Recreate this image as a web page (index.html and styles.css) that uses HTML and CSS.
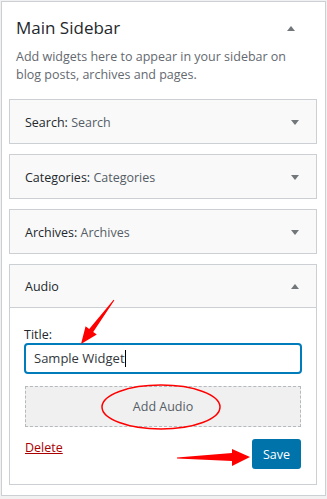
FILE: index.html
```html
<!DOCTYPE html>
<html lang="en">
<head>
    <meta charset="UTF-8">
    <meta name="viewport" content="width=device-width, initial-scale=1.0">
    <title>Main Sidebar</title>
    <link rel="stylesheet" href="styles.css">
</head>
<body>
    <div class="sidebar">
        <div class="sidebar-head">
            <div class="sidebar-title">
                <h2>Main Sidebar</h2>
                <span class="toggle up"></span>
            </div>
            <p class="desc">Add widgets here to appear in your sidebar on blog posts, archives and pages.</p>
        </div>

        <div class="widget">
            <div class="widget-top">
                <h3>Search: <span class="in-title">Search</span></h3>
                <span class="toggle"></span>
            </div>
        </div>

        <div class="widget">
            <div class="widget-top">
                <h3>Categories: <span class="in-title">Categories</span></h3>
                <span class="toggle"></span>
            </div>
        </div>

        <div class="widget">
            <div class="widget-top">
                <h3>Archives: <span class="in-title">Archives</span></h3>
                <span class="toggle"></span>
            </div>
        </div>

        <div class="widget open">
            <div class="widget-top">
                <h3>Audio</h3>
                <span class="toggle up"></span>
            </div>
            <div class="widget-inside">
                <label class="field-label">Title:</label>
                <div class="field">Sample Widget<span class="caret"></span></div>
                <div class="add-media">Add Audio</div>
                <div class="actions">
                    <a href="#" class="delete">Delete</a>
                    <button class="btn-save">Save</button>
                </div>
            </div>
        </div>
    </div>

    <!-- red annotations drawn over the screenshot -->
    <svg class="notes" width="327" height="499" viewBox="0 0 327 499">
        <polygon fill="#f00" points="113.6,299.7 89.2,328.9 85.6,326.2 81,344 96.8,334.6 93.2,331.9 114.4,300.3"/>
        <ellipse cx="161" cy="407" rx="59" ry="22" fill="none" stroke="#f00" stroke-width="1.5"/>
        <polygon fill="#f00" points="177,457.5 232,453 232,449 250,457 232,466 232,461 177,458.5"/>
    </svg>
</body>
</html>
```

FILE: styles.css
```css
:root {
    --border: #ccd0d4;
    --text: #23282d;
    --muted: #646970;
    --blue: #0073aa;
}

* {
    box-sizing: border-box;
}

body {
    margin: 0;
    background: #f1f1f1;
    font-family: 'Open Sans', 'Liberation Sans', sans-serif;
    color: var(--text);
    position: relative;
}

.sidebar {
    margin: 1px 1px 0 1px;
    background: #fff;
    border: 1px solid var(--border);
    padding: 0 8px 10px 7px;
}

.sidebar-head {
    padding: 15px 6px 15px 7px;
}

.sidebar-title {
    display: flex;
    justify-content: space-between;
    align-items: center;
}

.sidebar-title h2 {
    margin: 0;
    font-size: 17px;
    font-weight: 400;
    line-height: 22px;
}

.desc {
    margin: 9px 0 0;
    max-width: 278px;
    font-size: 12.5px;
    line-height: 18px;
    color: var(--muted);
}

.toggle {
    width: 0;
    height: 0;
    border-left: 4px solid transparent;
    border-right: 4px solid transparent;
    border-top: 5px solid #72777c;
    margin-right: 17px;
}

.toggle.up {
    border-top: none;
    border-bottom: 5px solid #72777c;
}

.sidebar-title .toggle {
    margin-right: 16px;
}

.widget {
    border: 1px solid var(--border);
    background: #f9f9f9;
    margin-bottom: 10px;
}

.widget:last-child {
    margin-bottom: 0;
}

.widget-top {
    height: 43px;
    display: flex;
    justify-content: space-between;
    align-items: center;
    padding-left: 15px;
    padding-top: 1px;
}

.widget-top h3 {
    margin: 0;
    font-size: 12.5px;
    font-weight: 400;
    color: var(--text);
}

.in-title {
    color: #555d66;
}

.widget.open .widget-top {
    border-bottom: 1px solid var(--border);
}

.widget-inside {
    background: #fff;
    padding: 19px 14px 15px;
}

.field-label {
    display: block;
    font-size: 12.5px;
    line-height: 16px;
}

.field {
    height: 31px;
    border: 2px solid #007cba;
    border-radius: 4px;
    padding: 0 8px;
    font-size: 13px;
    line-height: 27px;
    color: #32373c;
    background: #fff;
}

.caret {
    display: inline-block;
    width: 1px;
    height: 17px;
    background: #000;
    vertical-align: -4px;
}

.add-media {
    margin: 12px 1px 0;
    height: 41px;
    border: 1px dashed #b4b9be;
    background: #f0f0f1;
    display: flex;
    justify-content: center;
    align-items: center;
    font-size: 12.5px;
    color: #555d66;
}

.actions {
    margin-top: 12px;
    display: flex;
    justify-content: space-between;
    align-items: flex-start;
    padding-left: 1px;
}

.delete {
    font-size: 12.5px;
    line-height: 18px;
    color: #a00;
}

.btn-save {
    width: 49px;
    height: 30px;
    margin-right: 1px;
    border: none;
    border-radius: 3px;
    background: var(--blue);
    color: #fff;
    font-family: inherit;
    font-size: 12.5px;
    padding: 0;
}

.notes {
    position: absolute;
    top: 0;
    left: 0;
    pointer-events: none;
}
```
